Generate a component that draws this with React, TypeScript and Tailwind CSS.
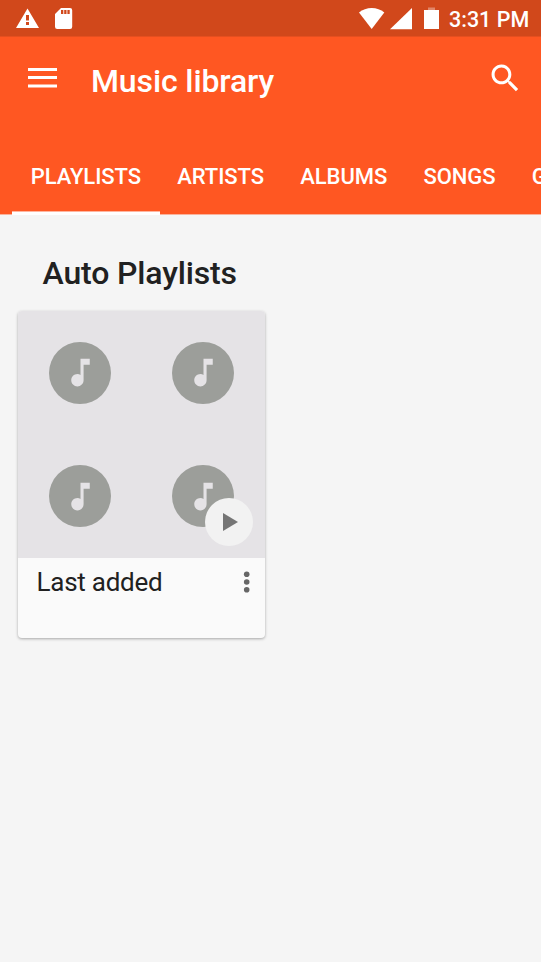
import React, { useState } from "react";

const TABS = ["PLAYLISTS", "ARTISTS", "ALBUMS", "SONGS", "GENRES"];

function StatusBar() {
  return (
    <div className="h-[36px] flex items-center justify-between bg-[#d1481b] pl-4 pr-3">
      <div className="flex items-center">
        {/* Warning */}
        <svg width="24" height="36" viewBox="0 0 24 36" fill="#fff">
          <path fillRule="evenodd" d="M11.5 8.5L23 28H0L11.5 8.5zM10 15v5.5h3V15h-3zm0 7v3h3v-3h-3z" />
        </svg>
        {/* SD card */}
        <svg width="18" height="36" viewBox="0 0 18 36" fill="#fff" className="ml-[15px]">
          <path fillRule="evenodd" d="M6 8h9a2.2 2.2 0 0 1 2.2 2.2v16.6a2.2 2.2 0 0 1-2.2 2.2H2.2A2.2 2.2 0 0 1 0 26.8V14L6 8zM6 10v4h2.3v-4H6zm3.2 0v4h2.3v-4H9.2zm3.2 0v4h2.3v-4h-2.3z" />
        </svg>
      </div>
      <div className="flex items-center">
        <svg width="26" height="36" viewBox="0 0 26 36" fill="#fff">
          <path d="M0 12.5C3.5 9.6 8 8 12.7 8s9.2 1.6 12.6 4.5L12.7 29 0 12.5z" />
        </svg>
        <svg width="22" height="36" viewBox="0 0 22 36" fill="#fff" className="ml-[5px]">
          <path d="M22 8v21.3H0L22 8z" />
        </svg>
        <svg width="15" height="36" viewBox="0 0 15 36" fill="#fff" className="ml-3">
          <path d="M4 7.5h7V10H4z" opacity=".35" />
          <path d="M0 10h15v19H0z" />
        </svg>
        <span className="ml-[10px] mt-[3px] w-[80px] whitespace-nowrap text-[21.5px] leading-[30px] font-medium">3:31 PM</span>
      </div>
    </div>
  );
}

function NoteTile() {
  return (
    <div className="flex items-center justify-center">
      <div className="w-[62px] h-[62px] rounded-full bg-[#9c9e9a] flex items-center justify-center">
        <svg width="37" height="37" viewBox="0 0 24 24" fill="#e5e3e6" className="ml-[1px]">
          <path d="M12 3v10.55c-.59-.34-1.27-.55-2-.55-2.21 0-4 1.79-4 4s1.79 4 4 4 4-1.79 4-4V7h4V3h-6z" />
        </svg>
      </div>
    </div>
  );
}

function PlaylistCard({ title }: { title: string }) {
  return (
    <div className="w-[247px] h-[327px] ml-[18px] rounded-[4px] bg-[#fafafa] shadow-[0_1px_3px_rgba(0,0,0,0.32)]">
      <div className="relative h-[247px] rounded-t-[4px] bg-[#e5e3e6] grid grid-cols-2 grid-rows-2">
        {[0, 1, 2, 3].map((i) => (
          <NoteTile key={i} />
        ))}
        <button className="absolute right-[12px] bottom-[12px] w-[48px] h-[48px] rounded-full bg-[#f2f2f2]" aria-label="Play">
          <svg width="48" height="48" viewBox="0 0 48 48" fill="#757575">
            <path d="M18 15v18l15-9z" />
          </svg>
        </button>
      </div>
      <div className="flex items-center justify-between pl-[18.5px] pr-[3px] h-[48px]">
        <span className="text-[26px] leading-[48px] tracking-[-0.25px] text-[#212121]">{title}</span>
        <svg width="31" height="31" viewBox="0 0 31 31" fill="#666">
          <circle cx="15.7" cy="7.3" r="2.8" />
          <circle cx="15.7" cy="15" r="2.8" />
          <circle cx="15.7" cy="22.8" r="2.8" />
        </svg>
      </div>
    </div>
  );
}

export default function App() {
  const [activeTab, setActiveTab] = useState("PLAYLISTS");

  return (
    <div className="w-[541px] h-[962px] overflow-hidden bg-[#f5f5f5] font-[Roboto,sans-serif] text-white">
      <StatusBar />

      {/* App bar */}
      <header className="h-[179px] bg-[#ff5722] border-t border-t-[#e64f1f] border-b border-b-[#fab29b] flex flex-col justify-between">
        <div className="flex items-start pl-[28px] pr-[18px] pt-[23px]">
          <svg width="29" height="37" viewBox="0 0 29 37" fill="#fff">
            <path d="M0 8h29v3H0zM0 16h29v3H0zM0 24.5h29v3H0z" />
          </svg>
          <h1 className="ml-[34px] mt-[1px] flex-1 text-[32px] leading-[40px] tracking-[-0.12px] font-medium">Music library</h1>
          <svg width="36.5" height="36.5" viewBox="0 0 24 24" fill="#fff">
            <path d="M15.5 14h-.79l-.28-.27C15.41 12.59 16 11.11 16 9.5 16 5.91 13.09 3 9.5 3S3 5.91 3 9.5 5.91 16 9.5 16c1.61 0 3.09-.59 4.23-1.57l.27.28v.79l5 4.99L20.49 19l-4.99-5zm-6 0C7.01 14 5 11.99 5 9.5S7.01 5 9.5 5 14 7.01 14 9.5 11.99 14 9.5 14z" />
          </svg>
        </div>
        <nav className="flex pl-[12.6px] h-[75px] -mb-px">
          {TABS.map((tab) => (
            <button
              key={tab}
              onClick={() => setActiveTab(tab)}
              className="relative shrink-0 px-[18.1px] pt-[1px] pb-[4px] text-[22px] tracking-[-0.06px] font-medium"
            >
              {tab}
              {activeTab === tab && (
                <span className="absolute -left-[0.3px] -right-[0.6px] bottom-0 h-[4px] bg-white border-t border-[#ffb59f]" />
              )}
            </button>
          ))}
        </nav>
      </header>

      <main className="pt-[38px]">
        <h2 className="pl-[42.5px] text-[32px] leading-[40px] tracking-[-0.15px] font-medium text-[#212121] mb-[18px]">Auto Playlists</h2>
        <PlaylistCard title="Last added" />
      </main>
    </div>
  );
}
